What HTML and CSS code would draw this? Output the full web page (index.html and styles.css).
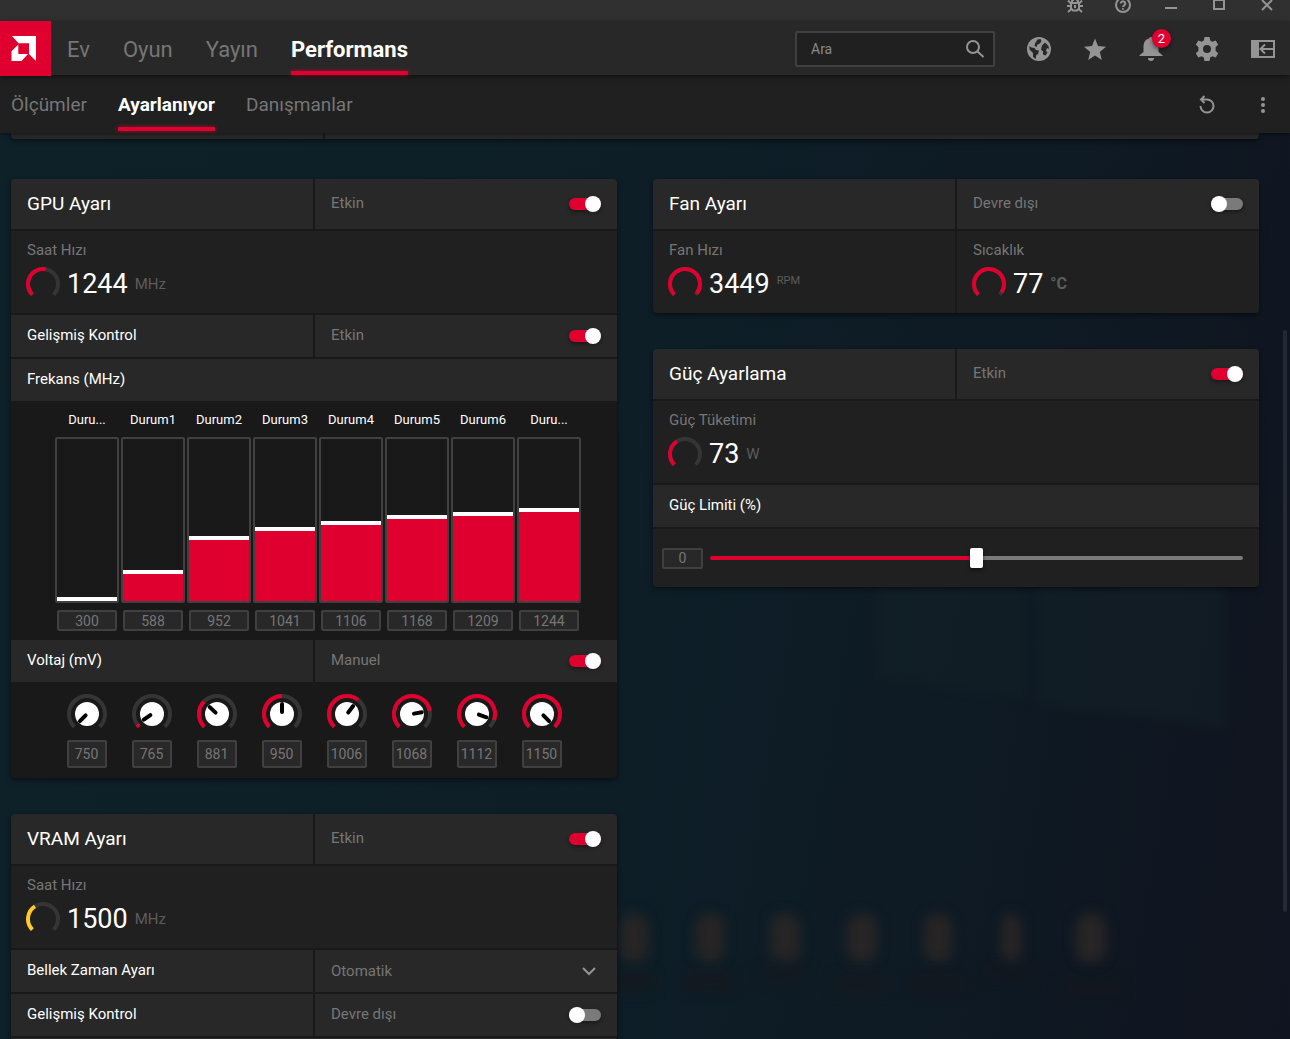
FILE: index.html
```html
<!DOCTYPE html>
<html lang="tr">
<head>
    <meta charset="UTF-8">
    <meta name="viewport" content="width=device-width, initial-scale=1.0">
    <title>Performans - Ayarlanıyor</title>
    <link rel="stylesheet" href="styles.css">
</head>
<body>
    <svg class="backdrop" viewBox="0 0 1290 1039" preserveAspectRatio="xMaxYMax slice" aria-hidden="true">
        <polygon class="backdrop-panel" points="876,480 1026,480 1026,700 876,678"/>
        <polygon class="backdrop-panel" points="1034,480 1226,480 1226,728 1034,704"/>
        <g class="backdrop-icons">
            <rect x="620" y="914" width="28" height="48" rx="12"/>
            <rect x="696" y="914" width="28" height="48" rx="12"/>
            <rect x="770" y="914" width="30" height="48" rx="12"/>
            <rect x="847" y="914" width="30" height="48" rx="12"/>
            <rect x="924" y="914" width="28" height="48" rx="12"/>
            <rect x="1001" y="914" width="20" height="48" rx="10"/>
            <rect x="1076" y="914" width="30" height="48" rx="12"/>
        </g>
        <g class="backdrop-names">
            <rect x="606" y="972" width="50" height="18"/>
            <rect x="684" y="972" width="50" height="20"/>
            <rect x="756" y="968" width="54" height="12"/>
            <rect x="834" y="974" width="52" height="20"/>
            <rect x="910" y="974" width="54" height="20"/>
            <rect x="982" y="966" width="54" height="12"/>
            <rect x="1060" y="980" width="60" height="16"/>
        </g>
    </svg>

    <div class="titlebar">
        <button class="icon-btn" aria-label="Hata bildir"><svg class="icon-sm" viewBox="0 0 16 16"><path class="line" d="M4 6h8v5.500l-2 2H6l-2-2zM5 6V4l2-2h2l2 2v2M0 9h4M12 9h4M1 3.500l3 3M15 3.500l-3 3M1 15l3.500-3M15 15l-3.500-3M8 8v3"/></svg></button>
        <button class="icon-btn" aria-label="Yardım"><svg class="icon-sm" viewBox="0 0 16 16"><circle class="line" cx="8" cy="8" r="7"/><path class="line" d="M5.800 6.500a2.200 2.200 0 1 1 3.400 1.800Q8 9 8 10M8 11.200v1.600"/></svg></button>
        <button class="icon-btn" aria-label="Küçült"><svg class="icon-sm" viewBox="0 0 16 16"><path class="line" d="M2 11h12"/></svg></button>
        <button class="icon-btn" aria-label="Ekranı kapla"><svg class="icon-sm" viewBox="0 0 16 16"><path class="line" d="M3 3h10v9H3z"/></svg></button>
        <button class="icon-btn" aria-label="Kapat"><svg class="icon-sm" viewBox="0 0 16 16"><path class="line" d="M3 3l10 10M13 3L3 13"/></svg></button>
    </div>

    <header class="header">
        <a href="#" class="logo" aria-label="AMD"><svg viewBox="0 0 25 25"><path d="M1 0H25V25L18 18V7.300H7.500ZM7.300 8.500V18H17L10.500 25H.5V15.300Z"/></svg></a>
        <nav class="nav">
            <a href="#">Ev</a>
            <a href="#">Oyun</a>
            <a href="#">Yayın</a>
            <a href="#" class="active">Performans</a>
        </nav>
        <div class="header-tools">
            <label class="search">
                <input type="text" placeholder="Ara" aria-label="Ara">
                <svg viewBox="0 0 20 20"><circle class="line" cx="8" cy="8" r="6"/><path class="line" d="M12.500 12.500l6 5.500"/></svg>
            </label>
            <button class="icon-btn" aria-label="Web"><svg viewBox="0 0 24 24"><circle cx="12" cy="12" r="12"/><path class="cut" d="M2.500 9l2 1.500 3 .5 1.500 2 3 .5-1 3.500-2 1.500v3.500l-3-2v-4L2.500 12.500zM10.500 2.500l3-.5 1 2-1.500 2.500-2.500 1-1 2.500-2-1 .5-2.500zM15 8.500l3-3 3.500 3.500 .5 3-2-1-1 3 1.500 1.500-2 3-2.500-1v-3l-2-2z"/></svg></button>
            <button class="icon-btn" aria-label="Sık kullanılanlar"><svg viewBox="0 0 24 24"><path d="M12 1.500l3 7.600 8 .6-6.200 5.200 2 8-6.800-4.400-6.800 4.400 2-8L1 9.700l8-.6z"/></svg></button>
            <button class="icon-btn bell" aria-label="Bildirimler"><svg viewBox="0 0 24 24"><path d="M12 0a2 2 0 0 1 2 1.500q5.500 1.500 5.500 7.500v6l4 3.200v.8H.5v-.8l4-3.200V9q0-6 5.500-7.500a2 2 0 0 1 2-1.500zM9 21h6a3 3 0 0 1-6 0z"/></svg><span class="badge">2</span></button>
            <button class="icon-btn" aria-label="Ayarlar"><svg viewBox="0 0 24 24"><path fill-rule="evenodd" d="M9.500 0h5l.7 3.500 2.200 1.200 3.300-1.200 2.500 4.300-2.600 2.300v3.800l2.600 2.300-2.500 4.300-3.300-1.200-2.200 1.200-.7 3.500h-5l-.7-3.500-2.200-1.200-3.300 1.200L.8 16.200l2.600-2.300v-3.800L.8 7.800l2.500-4.300 3.300 1.200 2.200-1.200zM12 8a4 4 0 1 0 0 8 4 4 0 0 0 0-8z"/></svg></button>
            <button class="icon-btn" aria-label="Kenar çubuğu"><svg viewBox="0 0 24 24"><path d="M0 3h8v18H0z"/><path class="line-thin" d="M7 4h16v16H7M22 12H9M14 7.500L9.500 12l4.500 4.500"/></svg></button>
        </div>
    </header>

    <div class="subheader">
        <nav class="subnav">
            <a href="#">Ölçümler</a>
            <a href="#" class="active">Ayarlanıyor</a>
            <a href="#">Danışmanlar</a>
        </nav>
        <div class="header-tools">
            <button class="icon-btn" aria-label="Sıfırla"><svg viewBox="0 0 24 24"><path class="line" d="M5.500 13a6.500 6.500 0 1 0 6.500-6.500H6M9.500 3L6 6.500 9.500 10"/></svg></button>
            <button class="icon-btn" aria-label="Diğer"><svg viewBox="0 0 24 24"><circle cx="12" cy="6" r="2"/><circle cx="12" cy="12" r="2"/><circle cx="12" cy="18" r="2"/></svg></button>
        </div>
    </div>

    <main class="content">
        <div class="card profile-strip"><div class="cell"></div><div class="cell"></div></div>

        <div class="columns">
            <div class="column">
                <section class="card">
                    <div class="row row-title">
                        <h2 class="cell">GPU Ayarı</h2>
                        <label class="cell"><span>Etkin</span><input type="checkbox" class="toggle" checked></label>
                    </div>
                    <div class="metric">
                        <div class="metric-name">Saat Hızı</div>
                        <div class="metric-value"><svg class="gauge" data-fill="0.54"></svg><strong>1244</strong><span class="unit">MHz</span></div>
                    </div>
                    <div class="row">
                        <h3 class="cell">Gelişmiş Kontrol</h3>
                        <label class="cell"><span>Etkin</span><input type="checkbox" class="toggle" checked></label>
                    </div>
                    <h3 class="cell">Frekans (MHz)</h3>
                    <div class="states" id="states"></div>
                    <div class="row">
                        <h3 class="cell">Voltaj (mV)</h3>
                        <label class="cell"><span>Manuel</span><input type="checkbox" class="toggle" checked></label>
                    </div>
                    <div class="knobs" id="knobs"></div>
                </section>

                <section class="card">
                    <div class="row row-title">
                        <h2 class="cell">VRAM Ayarı</h2>
                        <label class="cell"><span>Etkin</span><input type="checkbox" class="toggle" checked></label>
                    </div>
                    <div class="metric">
                        <div class="metric-name">Saat Hızı</div>
                        <div class="metric-value"><svg class="gauge gauge-yellow" data-fill="0.38"></svg><strong>1500</strong><span class="unit">MHz</span></div>
                    </div>
                    <div class="row">
                        <h3 class="cell">Bellek Zaman Ayarı</h3>
                        <div class="cell dropdown">
                            <select aria-label="Bellek Zaman Ayarı"><option>Otomatik</option></select>
                            <svg viewBox="0 0 24 24"><path class="line" d="M6 9l6 6 6-6"/></svg>
                        </div>
                    </div>
                    <div class="row">
                        <h3 class="cell">Gelişmiş Kontrol</h3>
                        <label class="cell"><span>Devre dışı</span><input type="checkbox" class="toggle"></label>
                    </div>
                    <div class="cell"></div>
                </section>
            </div>

            <div class="column">
                <section class="card">
                    <div class="row row-title">
                        <h2 class="cell">Fan Ayarı</h2>
                        <label class="cell"><span>Devre dışı</span><input type="checkbox" class="toggle"></label>
                    </div>
                    <div class="row">
                        <div class="metric">
                            <div class="metric-name">Fan Hızı</div>
                            <div class="metric-value"><svg class="gauge" data-fill="0.98"></svg><strong>3449</strong><span class="unit unit-small">RPM</span></div>
                        </div>
                        <div class="metric">
                            <div class="metric-name">Sıcaklık</div>
                            <div class="metric-value"><svg class="gauge" data-fill="0.96"></svg><strong>77</strong><span class="unit unit-bold">°C</span></div>
                        </div>
                    </div>
                </section>

                <section class="card">
                    <div class="row row-title">
                        <h2 class="cell">Güç Ayarlama</h2>
                        <label class="cell"><span>Etkin</span><input type="checkbox" class="toggle" checked></label>
                    </div>
                    <div class="metric">
                        <div class="metric-name">Güç Tüketimi</div>
                        <div class="metric-value"><svg class="gauge" data-fill="0.38"></svg><strong>73</strong><span class="unit">W</span></div>
                    </div>
                    <h3 class="cell">Güç Limiti (%)</h3>
                    <div class="limit">
                        <input type="text" class="value-box" value="0" aria-label="Güç limiti değeri">
                        <input type="range" class="slider" min="-50" max="50" value="0" aria-label="Güç Limiti (%)">
                    </div>
                </section>
            </div>
        </div>
    </main>
    <div class="scroll-thumb"></div>

    <script src="script.js"></script>
</body>
</html>
```

FILE: styles.css
```css
:root {
    --red: #e0002f;
    --yellow: #ffc92b;
    --row: #282828;
    --panel: #202020;
    --dark: #191919;
    --border: #404040;
    --muted: #767676;
    --icon: #949494;
}

* {
    box-sizing: border-box;
    margin: 0;
    padding: 0;
}

body {
    height: 100vh;
    overflow: hidden;
    font-family: Roboto, "Noto Sans", sans-serif;
    font-size: 15px;
    line-height: 20px;
    color: #fff;
    background: linear-gradient(100deg, #0e2128 0%, #0d1e27 50%, #0e1a24 75%, #101520 94%, #101420 100%);
}

a {
    color: inherit;
    text-decoration: none;
}

input,
select,
button {
    font: inherit;
    color: inherit;
    background: none;
    border: none;
    outline: none;
}

svg {
    display: block;
    fill: currentColor;
}

.line,
.line-thin {
    fill: none;
    stroke: currentColor;
    stroke-width: 2;
}

.cut {
    fill: var(--row);
}

/* background */
.backdrop {
    position: absolute;
    inset: 0;
    width: 100%;
    height: 100%;
    z-index: -1;
}

.backdrop-panel {
    fill: #132127;
    opacity: 0.5;
    filter: blur(5px);
}

.backdrop-icons {
    fill: #272525;
    filter: blur(6px);
}

.backdrop-names {
    fill: #17171c;
    opacity: 0.6;
    filter: blur(6px);
}

/* top bars */
.titlebar {
    display: flex;
    justify-content: flex-end;
    align-items: center;
    gap: 32px;
    height: 32px;
    margin-top: -11px;
    padding: 0 15px;
    background: #303030;
}

.icon-btn {
    color: var(--icon);
    cursor: pointer;
}

.icon-btn svg {
    width: 24px;
    height: 24px;
}

.icon-btn .icon-sm {
    width: 16px;
    height: 16px;
}

.header {
    position: relative;
    z-index: 2;
    display: flex;
    height: 54px;
    background: var(--row);
    box-shadow: 0 2px 5px rgba(0, 0, 0, 0.5);
}

.logo {
    display: flex;
    align-items: center;
    justify-content: center;
    width: 51px;
    height: 55px;
    padding-right: 5px;
    background: var(--red);
}

.logo svg {
    width: 25px;
    height: 25px;
}

.nav,
.subnav {
    display: flex;
    color: var(--muted);
}

.nav {
    gap: 33px;
    padding-left: 16px;
    font-size: 22px;
    line-height: 58px;
}

.subnav {
    gap: 31px;
    font-size: 19px;
    line-height: 60px;
}

.nav .active,
.subnav .active {
    position: relative;
    font-weight: 700;
    color: #fff;
}

.nav .active::after,
.subnav .active::after {
    content: "";
    position: absolute;
    left: 0;
    right: 0;
    bottom: 0;
    height: 4px;
    background: var(--red);
    box-shadow: 0 0 4px rgba(224, 0, 47, 0.7);
}

.subnav .active::after {
    bottom: 2px;
}

.header-tools {
    display: flex;
    align-items: center;
    gap: 32px;
    margin-left: auto;
    padding: 2px 15px 0 0;
}

.search {
    display: flex;
    align-items: center;
    width: 200px;
    height: 36px;
    padding: 0 8px 0 14px;
    border: 2px solid var(--border);
    border-radius: 2px;
    background: var(--panel);
    color: var(--icon);
}

.search input {
    flex: 1;
    min-width: 0;
    font-size: 14px;
}

.search input::placeholder {
    color: #8a8a8a;
}

.search svg {
    width: 20px;
    height: 20px;
}

.bell {
    position: relative;
}

.badge {
    position: absolute;
    top: -8px;
    right: -8px;
    width: 19px;
    height: 19px;
    border-radius: 50%;
    background: var(--red);
    box-shadow: 0 2px 4px rgba(0, 0, 0, 0.5);
    color: #fff;
    font-size: 13px;
    line-height: 19px;
}

.subheader {
    position: relative;
    z-index: 1;
    display: flex;
    height: 58px;
    padding-left: 11px;
    background: var(--panel);
    box-shadow: 0 1px 4px rgba(0, 0, 0, 0.5);
}

/* cards */
.content {
    padding: 0 31px 0 11px;
}

.card {
    display: grid;
    gap: 2px;
    overflow: hidden;
    border-radius: 4px;
    background: var(--dark);
    box-shadow: 0 2px 5px rgba(0, 0, 0, 0.5);
}

.profile-strip {
    grid-template-columns: 1fr 3fr;
    margin-bottom: 40px;
    border-radius: 0 0 4px 4px;
}

.profile-strip .cell {
    min-height: 6px;
}

.columns {
    display: grid;
    grid-template-columns: 1fr 1fr;
    gap: 36px;
    align-items: start;
}

.column {
    display: grid;
    gap: 36px;
}

.row {
    display: grid;
    grid-template-columns: 1fr 1fr;
    gap: 2px;
}

.cell {
    display: flex;
    align-items: center;
    justify-content: space-between;
    min-height: 42px;
    padding: 0 16px;
    background: var(--row);
}

.row-title .cell {
    min-height: 50px;
}

h2 {
    font-size: 19px;
    font-weight: 400;
}

h3 {
    font-size: 15px;
    font-weight: 400;
}

h3.cell,
.cell span {
    padding-bottom: 2px;
}

label.cell,
.dropdown {
    color: var(--muted);
}

.toggle {
    appearance: none;
    position: relative;
    width: 32px;
    height: 12px;
    border-radius: 6px;
    background: #7a7a7a;
    box-shadow: 0 2px 4px rgba(0, 0, 0, 0.4);
    cursor: pointer;
}

.toggle::before {
    content: "";
    position: absolute;
    top: -2px;
    left: 0;
    width: 16px;
    height: 16px;
    border-radius: 50%;
    background: #fff;
}

.toggle:checked {
    background: var(--red);
}

.toggle:checked::before {
    left: 16px;
}

.dropdown select {
    flex: 1;
    appearance: none;
}

.dropdown svg {
    width: 24px;
    height: 24px;
    color: var(--icon);
}

.metric {
    height: 82px;
    padding: 9px 15px;
    background: var(--panel);
}

.metric-name {
    padding-left: 1px;
    color: var(--muted);
}

.metric-value {
    display: flex;
    align-items: center;
    gap: 7px;
    height: 34px;
    margin-top: 7px;
}

.metric-value strong {
    font-size: 27px;
    font-weight: 400;
}

.gauge {
    width: 34px;
    height: 34px;
    color: var(--red);
}

.gauge-yellow {
    color: var(--yellow);
}

.arc,
.arc-fill {
    fill: none;
    stroke: #353535;
    stroke-width: 4;
}

.arc-fill {
    stroke: currentColor;
}

.unit {
    color: #5c5c5c;
}

.unit-small {
    padding-bottom: 6px;
    font-size: 11px;
}

.unit-bold {
    font-size: 16px;
    font-weight: 700;
}

/* frequency states */
.value-box {
    height: 21px;
    border: 2px solid var(--border);
    border-radius: 2px;
    background: var(--row);
    color: var(--muted);
    font-size: 14px;
    text-align: center;
}

.states {
    display: grid;
    grid-template-columns: repeat(8, 1fr);
    gap: 2px;
    margin: -2px 0;
    padding: 9px 36px 9px 44px;
}

.state {
    display: flex;
    flex-direction: column;
    align-items: center;
    gap: 7px;
    min-width: 0;
    font-size: 13px;
}

.state-slider {
    appearance: none;
    writing-mode: vertical-lr;
    direction: rtl;
    width: 100%;
    height: 166px;
    border: 2px solid var(--border);
    border-radius: 2px;
    background: linear-gradient(to top, var(--red) var(--fill), transparent var(--fill));
}

.state-slider::-webkit-slider-thumb {
    appearance: none;
    width: 60px;
    height: 4px;
    background: #fff;
}

.state .value-box {
    width: 60px;
}

/* voltage knobs */
.knobs {
    display: flex;
    justify-content: center;
    gap: 25px;
    margin-top: -2px;
    padding: 12px 0 10px;
}

.knob {
    display: grid;
    gap: 6px;
    width: 40px;
}

.knob svg {
    width: 40px;
    height: 40px;
    color: var(--red);
}

.knob-cap {
    fill: #fff;
}

.knob-hand {
    stroke: #000;
    stroke-width: 4;
    stroke-linecap: round;
}

.knob .value-box {
    width: 40px;
    height: 28px;
}

/* power limit */
.limit {
    display: flex;
    align-items: center;
    gap: 7px;
    height: 58px;
    padding: 0 16px 0 9px;
    background: var(--panel);
}

.limit .value-box {
    width: 41px;
}

.slider {
    appearance: none;
    flex: 1;
    height: 4px;
    border-radius: 2px;
    background: linear-gradient(to right, var(--red) 50%, #7a7a7a 50%);
}

.slider::-webkit-slider-thumb {
    appearance: none;
    width: 13px;
    height: 20px;
    border-radius: 2px;
    background: #fff;
    box-shadow: 0 2px 4px rgba(0, 0, 0, 0.5);
}

.scroll-thumb {
    position: absolute;
    top: 330px;
    right: 3px;
    width: 4px;
    height: 56vh;
    border-radius: 2px;
    background: #242a35;
}
```

FILE: script.js
```js
const MIN_FREQ = 300;
const MAX_FREQ = 1980;
const MIN_VOLT = 750;
const MAX_VOLT = 1150;

const states = [
    { name: 'Durum0 (Min)', freq: 300, volt: 750 },
    { name: 'Durum1', freq: 588, volt: 765 },
    { name: 'Durum2', freq: 952, volt: 881 },
    { name: 'Durum3', freq: 1041, volt: 950 },
    { name: 'Durum4', freq: 1106, volt: 1006 },
    { name: 'Durum5', freq: 1168, volt: 1068 },
    { name: 'Durum6', freq: 1209, volt: 1112 },
    { name: 'Durum7 (Maks)', freq: 1244, volt: 1150 }
];

// 270 degree arc, open at the bottom
function arc(size, fill) {
    const c = size / 2;
    const r = c - 2;
    const point = part => {
        const a = (part * 270 - 225) * Math.PI / 180;
        return `${c + r * Math.cos(a)} ${c + r * Math.sin(a)}`;
    };
    const path = (cls, end) => `<path class="${cls}" d="M${point(0)}A${r} ${r} 0 ${end > 2 / 3 ? 1 : 0} 1 ${point(end)}"/>`;
    return path('arc', 1) + (fill > 0 ? path('arc-fill', fill) : '');
}

document.querySelectorAll('.gauge').forEach(svg => {
    svg.setAttribute('viewBox', '0 0 34 34');
    svg.innerHTML = arc(34, Number(svg.dataset.fill));
});

document.getElementById('states').innerHTML = states.map(s => {
    const fill = (s.freq - MIN_FREQ) / (MAX_FREQ - MIN_FREQ) * 100;
    const label = s.name.length > 6 ? s.name.slice(0, 4) + '...' : s.name;
    return `
        <div class="state">
            <span>${label}</span>
            <input type="range" class="state-slider" min="${MIN_FREQ}" max="${MAX_FREQ}" value="${s.freq}" aria-label="${s.name}" style="--fill: ${fill}%">
            <input type="text" class="value-box" value="${s.freq}" aria-label="${s.name} MHz">
        </div>`;
}).join('');

document.getElementById('knobs').innerHTML = states.map(s => {
    const fill = (s.volt - MIN_VOLT) / (MAX_VOLT - MIN_VOLT);
    return `
        <div class="knob">
            <svg viewBox="0 0 40 40">
                ${arc(40, fill)}
                <circle class="knob-cap" cx="20" cy="20" r="12"/>
                <path class="knob-hand" d="M20 18V10" transform="rotate(${fill * 270 - 135} 20 20)"/>
            </svg>
            <input type="text" class="value-box" value="${s.volt}" aria-label="${s.name} mV">
        </div>`;
}).join('');
```
